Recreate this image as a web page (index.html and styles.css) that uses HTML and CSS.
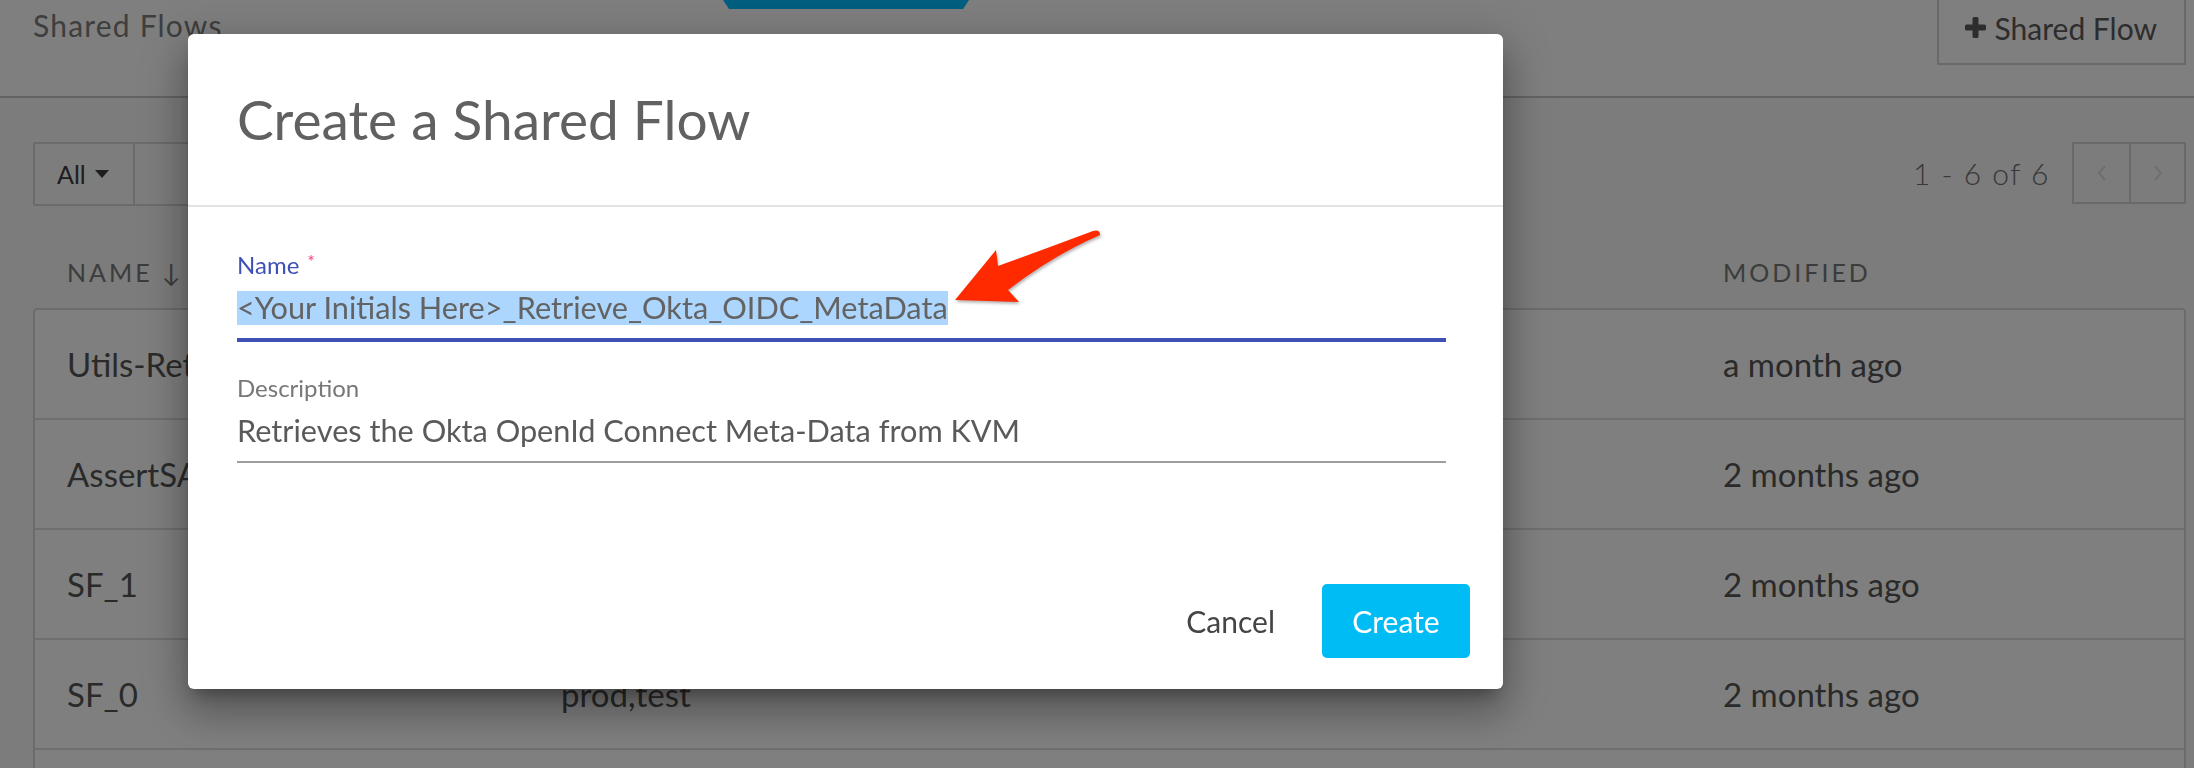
FILE: index.html
```html
<!DOCTYPE html>
<html lang="en">
<head>
<meta charset="utf-8">
<title>Shared Flows</title>
<link rel="stylesheet" href="styles.css">
</head>
<body>
<div class="page">
  <header class="topbar">
    <h1 class="page-title">Shared Flows</h1>
    <div class="tab"></div>
    <div class="spacer"></div>
    <button class="add-btn" type="button">
      <svg class="plus" width="21" height="21" viewBox="0 0 21 21"><rect x="7.5" y="0" width="6" height="21" rx="1.5"/><rect x="0" y="7.5" width="21" height="6" rx="1.5"/></svg>
      <span>Shared Flow</span>
    </button>
  </header>

  <main class="content">
    <div class="toolbar">
      <div class="filter">
        <button class="filter-select" type="button">All <span class="caret"></span></button>
        <div class="filter-search"></div>
      </div>
      <div class="pager">
        <span class="pager-count">1 - 6 of 6</span>
        <div class="pager-btns">
          <button class="pager-btn" type="button"><svg width="10" height="16" viewBox="0 0 10 16"><polyline points="8,1 2,8 8,15"/></svg></button>
          <button class="pager-btn" type="button"><svg width="10" height="16" viewBox="0 0 10 16"><polyline points="2,1 8,8 2,15"/></svg></button>
        </div>
      </div>
    </div>

    <div class="cols">
      <div class="col-head">NAME <span class="sort">↓</span></div>
      <div class="col-head">ENVIRONMENTS</div>
      <div class="col-head">MODIFIED</div>
    </div>

    <div class="table">
      <div class="row"><div class="cell">Utils-RetrieveOktaConfig</div><div class="cell">prod,test</div><div class="cell">a month ago</div></div>
      <div class="row"><div class="cell">AssertSAMLToken</div><div class="cell">prod,test</div><div class="cell">2 months ago</div></div>
      <div class="row"><div class="cell">SF_1</div><div class="cell">prod,test</div><div class="cell">2 months ago</div></div>
      <div class="row"><div class="cell">SF_0</div><div class="cell">prod,test</div><div class="cell">2 months ago</div></div>
      <div class="row"><div class="cell">SF_Logging</div><div class="cell">prod,test</div><div class="cell">3 months ago</div></div>
    </div>
  </main>
</div>

<div class="overlay"></div>

<div class="dialog" role="dialog">
  <div class="dialog-head">
    <h2 class="dialog-title">Create a Shared Flow</h2>
  </div>
  <div class="dialog-body">
    <div class="field field-active">
      <label class="field-label">Name<span class="req">*</span></label>
      <div class="field-input"><span class="sel">&lt;Your Initials Here&gt;_Retrieve_Okta_OIDC_MetaData</span></div>
    </div>
    <div class="field">
      <label class="field-label">Description</label>
      <div class="field-input">Retrieves the Okta OpenId Connect Meta-Data from KVM</div>
    </div>
  </div>
  <div class="dialog-foot">
    <button class="btn-cancel" type="button">Cancel</button>
    <button class="btn-create" type="button">Create</button>
  </div>
</div>

<svg class="arrow" width="170" height="95" viewBox="0 0 170 95">
  <path d="M15,80 L56,30 L58,46 Q105,29 153,11 Q160,9 160,15 Q112,36 68,70 L79,82 Z"/>
</svg>
</body>
</html>
```

FILE: styles.css
```css
html, body {
  margin: 0;
  padding: 0;
  overflow: hidden;
  height: 100%;
}

body {
  background: #ffffff;
  font-family: "Lato", "Liberation Sans", sans-serif;
  color: #555555;
}

button {
  font-family: inherit;
  background: none;
  border: none;
  margin: 0;
  cursor: pointer;
}

.page {
  width: 100%;
}

/* ---------- top bar ---------- */
.topbar {
  display: grid;
  grid-template-columns: 690px 246px 1fr auto;
  align-items: start;
  height: 96px;
  padding: 0 8px 0 33px;
  border-bottom: 2px solid #c6c6c6;
  background: #ffffff;
}

.page-title {
  margin: 8px 0 0;
  font-size: 30px;
  line-height: 34px;
  letter-spacing: 1.2px;
  font-weight: 400;
  color: #7c7c7c;
  white-space: nowrap;
}

.tab {
  height: 9px;
  background: #00befe;
  clip-path: polygon(0 0, 100% 0, calc(100% - 6px) 100%, 6px 100%);
}

.add-btn {
  display: flex;
  align-items: center;
  gap: 9px;
  box-sizing: border-box;
  height: 75px;
  margin-top: -10px;
  padding: 0 27px 0 26px;
  border: 2px solid #d2d2d2;
  color: #5a5a5a;
  font-size: 30px;
  line-height: 36px;
}

.plus {
  fill: #5a5a5a;
  flex: none;
}

/* ---------- content ---------- */
.content {
  background: #f6f8f6;
  padding: 44px 8px 0 33px;
}

.toolbar {
  display: flex;
  justify-content: space-between;
  align-items: flex-start;
  height: 64px;
}

.filter {
  display: flex;
  box-sizing: border-box;
  height: 64px;
  width: 1100px;
  border: 2px solid #d6d6d6;
  border-radius: 2px;
  background: #fbfbfb;
}

.filter-select {
  display: flex;
  align-items: center;
  gap: 9px;
  box-sizing: border-box;
  width: 100px;
  padding: 0 0 0 22px;
  border-right: 2px solid #d6d6d6;
  font-size: 25px;
  color: #3c3c3c;
}

.caret {
  width: 0;
  height: 0;
  border-left: 7.5px solid transparent;
  border-right: 7.5px solid transparent;
  border-top: 8px solid #3c3c3c;
}

.filter-search {
  flex: 1;
}

.pager {
  display: flex;
  align-items: center;
  gap: 22px;
  height: 62px;
}

.pager-count {
  font-size: 30px;
  font-weight: 300;
  letter-spacing: 1.5px;
  color: #707070;
}

.pager-btns {
  display: flex;
  box-sizing: border-box;
  height: 62px;
  border: 2px solid #d4d4d4;
}

.pager-btn {
  width: 55px;
  height: 58px;
  display: flex;
  align-items: center;
  justify-content: center;
  padding: 0;
}

.pager-btn + .pager-btn {
  border-left: 2px solid #d4d4d4;
}

.pager-btn polyline {
  fill: none;
  stroke: #dcdcdc;
  stroke-width: 2;
}

/* ---------- columns ---------- */
.cols {
  display: grid;
  grid-template-columns: 494px 1162px 1fr;
  height: 102px;
  box-sizing: border-box;
  padding: 51px 0 0 2px;
}

.col-head {
  padding-left: 32px;
  font-size: 25px;
  line-height: 30px;
  letter-spacing: 3px;
  color: #787878;
  white-space: nowrap;
}

.sort {
  letter-spacing: 0;
}

/* ---------- table ---------- */
.table {
  border: 2px solid #d8d8d8;
  border-radius: 4px;
  background: #ffffff;
}

.row {
  display: grid;
  grid-template-columns: 494px 1162px 1fr;
  align-items: center;
  height: 108px;
  border-bottom: 2px solid #dedede;
}

.cell {
  padding-left: 32px;
  font-size: 33px;
  color: #555555;
  white-space: nowrap;
  overflow: hidden;
}

/* ---------- overlay & dialog ---------- */
.overlay {
  position: fixed;
  inset: 0;
  background: rgba(0, 0, 0, 0.5);
  z-index: 5;
}

.dialog {
  position: absolute;
  left: 188px;
  top: 34px;
  width: 1315px;
  height: 655px;
  z-index: 10;
  display: flex;
  flex-direction: column;
  background: #ffffff;
  border-radius: 6px;
  box-shadow:
    0 11px 15px -7px rgba(0, 0, 0, 0.3),
    0 24px 38px 3px rgba(0, 0, 0, 0.2),
    0 9px 46px 8px rgba(0, 0, 0, 0.16);
}

.dialog-head {
  height: 173px;
  box-sizing: border-box;
  padding: 53px 49px 0;
  border-bottom: 2px solid #e2e2e2;
}

.dialog-title {
  margin: 0;
  font-size: 55px;
  line-height: 64px;
  font-weight: 400;
  color: #616161;
  white-space: nowrap;
}

.dialog-body {
  padding: 44px 57px 0 49px;
}

.field + .field {
  margin-top: 32px;
}

.field-label {
  display: block;
  font-size: 24px;
  line-height: 28px;
  color: #777777;
}

.field-active .field-label {
  color: #3f51b5;
}

.req {
  margin-left: 8px;
  color: #ff4081;
  font-size: 18px;
  vertical-align: top;
  line-height: 20px;
}

.field-input {
  margin-top: 12px;
  padding-bottom: 13px;
  font-size: 30.7px;
  line-height: 34px;
  color: #5a5a5a;
  border-bottom: 2px solid #9e9e9e;
  white-space: nowrap;
}

.field-active .field-input {
  color: #636363;
  border-bottom: 4px solid #3f51b5;
}

.sel {
  background: #acd6fe;
  display: inline-block;
  vertical-align: top;
}

.dialog-foot {
  margin-top: auto;
  display: flex;
  justify-content: flex-end;
  align-items: center;
  gap: 27px;
  padding: 0 33px 31px 0;
}

.btn-cancel {
  padding: 0 20px;
  font-size: 30px;
  line-height: 74px;
  color: #444444;
}

.btn-create {
  width: 148px;
  height: 74px;
  border-radius: 5px;
  background: #00bcf4;
  color: #ffffff;
  font-size: 30px;
}

.arrow {
  position: absolute;
  left: 940px;
  top: 220px;
  z-index: 20;
  overflow: visible;
  filter: drop-shadow(1px 2px 1.5px rgba(0, 0, 0, 0.3));
}

.arrow path {
  fill: #ff2a00;
}
```
